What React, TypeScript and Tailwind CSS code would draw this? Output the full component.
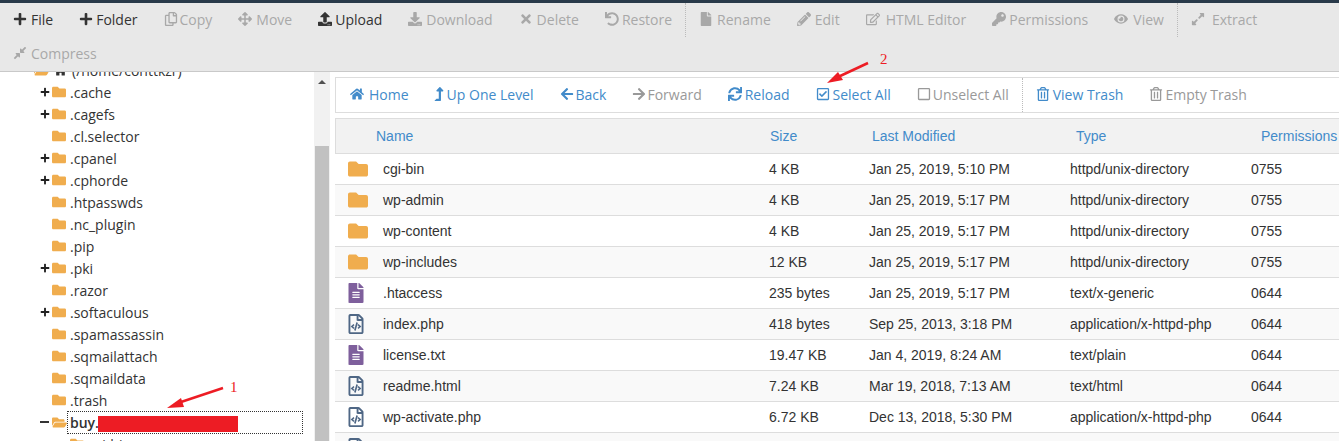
import type { ComponentType } from 'react'
import {
  FaPlus, FaRegCopy, FaArrowsAlt, FaUpload, FaDownload, FaTimes, FaUndo, FaFile, FaPencilAlt, FaRegEdit,
  FaKey, FaEye, FaExpandAlt, FaCompressAlt, FaHome, FaLevelUpAlt, FaArrowLeft, FaArrowRight, FaSync,
  FaRegCheckSquare, FaRegSquare, FaRegTrashAlt, FaFolder, FaFolderOpen, FaFileAlt, FaRegFileCode,
} from 'react-icons/fa'

type Icon = ComponentType<{ size?: number; className?: string }>
type Item = { label: string; icon: Icon; slot: string; on?: boolean; sep?: boolean; nudge?: string }

const TOOLS: Item[] = [
  { label: 'File', icon: FaPlus, slot: 'w-[18px]', on: true },
  { label: 'Folder', icon: FaPlus, slot: 'w-[17px]', on: true },
  { label: 'Copy', icon: FaRegCopy, slot: 'w-[16px]' },
  { label: 'Move', icon: FaArrowsAlt, slot: 'w-[18px]' },
  { label: 'Upload', icon: FaUpload, slot: 'w-[17px]', on: true },
  { label: 'Download', icon: FaDownload, slot: 'w-[18px]' },
  { label: 'Delete', icon: FaTimes, slot: 'w-[18px]' },
  { label: 'Restore', icon: FaUndo, slot: 'w-[17px]', sep: true },
  { label: 'Rename', icon: FaFile, slot: 'w-[18px]' },
  { label: 'Edit', icon: FaPencilAlt, slot: 'w-[18px]' },
  { label: 'HTML Editor', icon: FaRegEdit, slot: 'w-[20px]' },
  { label: 'Permissions', icon: FaKey, slot: 'w-[17px]' },
  { label: 'View', icon: FaEye, slot: 'w-[19px]', sep: true },
  { label: 'Extract', icon: FaExpandAlt, slot: 'w-[21px]' },
  { label: 'Compress', icon: FaCompressAlt, slot: 'w-[18px]' },
]

const TREE = [
  { name: '.cache', plus: true },
  { name: '.cagefs', plus: true },
  { name: '.cl.selector' },
  { name: '.cpanel', plus: true },
  { name: '.cphorde', plus: true },
  { name: '.htpasswds' },
  { name: '.nc_plugin' },
  { name: '.pip' },
  { name: '.pki', plus: true },
  { name: '.razor' },
  { name: '.softaculous', plus: true },
  { name: '.spamassassin' },
  { name: '.sqmailattach' },
  { name: '.sqmaildata' },
  { name: '.trash' },
]

const NAV: Item[] = [
  { label: 'Home', icon: FaHome, slot: 'w-[19px]', on: true },
  { label: 'Up One Level', icon: FaLevelUpAlt, slot: 'w-[12px]', on: true, nudge: '-ml-[3px]' },
  { label: 'Back', icon: FaArrowLeft, slot: 'w-[16px]', on: true },
  { label: 'Forward', icon: FaArrowRight, slot: 'w-[15px]' },
  { label: 'Reload', icon: FaSync, slot: 'w-[17px]', on: true },
  { label: 'Select All', icon: FaRegCheckSquare, slot: 'w-[17px]', on: true },
  { label: 'Unselect All', icon: FaRegSquare, slot: 'w-[16px]', sep: true },
  { label: 'View Trash', icon: FaRegTrashAlt, slot: 'w-[17px]', on: true },
  { label: 'Empty Trash', icon: FaRegTrashAlt, slot: 'w-[16px]' },
]

const FILES = [
  { name: 'cgi-bin', size: '4 KB', date: 'Jan 25, 2019, 5:10 PM', type: 'httpd/unix-directory', perm: '0755', kind: 'dir' },
  { name: 'wp-admin', size: '4 KB', date: 'Jan 25, 2019, 5:17 PM', type: 'httpd/unix-directory', perm: '0755', kind: 'dir' },
  { name: 'wp-content', size: '4 KB', date: 'Jan 25, 2019, 5:17 PM', type: 'httpd/unix-directory', perm: '0755', kind: 'dir' },
  { name: 'wp-includes', size: '12 KB', date: 'Jan 25, 2019, 5:17 PM', type: 'httpd/unix-directory', perm: '0755', kind: 'dir' },
  { name: '.htaccess', size: '235 bytes', date: 'Jan 25, 2019, 5:17 PM', type: 'text/x-generic', perm: '0644', kind: 'text' },
  { name: 'index.php', size: '418 bytes', date: 'Sep 25, 2013, 3:18 PM', type: 'application/x-httpd-php', perm: '0644', kind: 'code' },
  { name: 'license.txt', size: '19.47 KB', date: 'Jan 4, 2019, 8:24 AM', type: 'text/plain', perm: '0644', kind: 'text' },
  { name: 'readme.html', size: '7.24 KB', date: 'Mar 19, 2018, 7:13 AM', type: 'text/html', perm: '0644', kind: 'code' },
  { name: 'wp-activate.php', size: '6.72 KB', date: 'Dec 13, 2018, 5:30 PM', type: 'application/x-httpd-php', perm: '0644', kind: 'code' },
  { name: 'wp-blog-header.php', size: '369 bytes', date: 'Dec 13, 2018, 5:30 PM', type: 'application/x-httpd-php', perm: '0644', kind: 'code' },
]

function FileIcon({ kind }: { kind: string }) {
  if (kind === 'dir') return <FaFolder size={20} className="text-[#f0ad4e]" />
  if (kind === 'text') return <FaFileAlt size={20} className="-ml-[2px] text-[#7e5f9c]" />
  return <FaRegFileCode size={20} className="-ml-[2px] text-[#4f6785]" />
}

export default function App() {
  return (
    <div className="relative flex h-[441px] flex-col overflow-hidden bg-white font-['Open_Sans',sans-serif] text-[14px] text-[#333]">
      <div className="h-[3px] shrink-0 bg-[#293a4a]" />

      {/* Toolbar */}
      <div className="flex h-[69px] shrink-0 flex-wrap content-start border-b border-[#c9c9c9] bg-[#e8e8e8]">
        {TOOLS.map(t => (
          <div
            key={t.label}
            className={`flex h-[34px] items-center px-[13px] pb-[2px] ${t.on ? 'text-[#333]' : 'text-[#a8a8a8]'} ${t.sep ? 'border-r border-dotted border-[#bbb]' : ''}`}
          >
            <span className={`flex shrink-0 ${t.slot}`}><t.icon size={14} className="shrink-0" /></span>
            <span>{t.label}</span>
          </div>
        ))}
      </div>

      <div className="flex min-h-0 flex-1">
        {/* Folder tree */}
        <div className="w-[314px] shrink-0 overflow-hidden">
          <div className="-mt-[13px] pl-[22px]">
            <div className="flex h-[22px] items-center">
              <span className="h-[2px] w-[9px] bg-[#bbb]" />
              <FaFolderOpen size={15} className="ml-[3px] text-[#f0ad4e]" />
              <FaHome size={13} className="ml-[5px] text-[#333]" />
              <span className="ml-[5px]">(/home/conttkzr)</span>
            </div>
            {TREE.map(f => (
              <div key={f.name} className="flex h-[22px] items-center pl-[18px]">
                <span className="flex w-[12px] shrink-0">{f.plus && <FaPlus size={10} className="text-[#222]" />}</span>
                <FaFolder size={14} className="text-[#f0ad4e]" />
                <span className="ml-[4px]">{f.name}</span>
              </div>
            ))}
            <div className="flex h-[22px] items-center pl-[18px]">
              <span className="h-[2px] w-[9px] shrink-0 bg-[#333]" />
              <FaFolderOpen size={15} className="ml-[3px] text-[#f0ad4e]" />
              <span className="flex h-[23px] w-[236px] shrink-0 items-center border border-dotted border-[#333] pl-[2px] font-semibold">buy.</span>
            </div>
            <div className="flex h-[22px] items-center pl-[48px]">
              <FaFolder size={14} className="text-[#f0ad4e]" />
              <span className="ml-[4px]">cgi-bin</span>
            </div>
          </div>
        </div>

        {/* Scrollbar */}
        <div className="relative w-[16px] shrink-0 bg-[#f1f1f1]">
          <div className="mx-auto mt-[8px] h-0 w-0 border-x-[4px] border-b-[4px] border-x-transparent border-b-[#505050]" />
          <div className="mx-[1px] mt-[62px] h-[300px] bg-[#c1c1c1]" />
        </div>

        {/* File list */}
        <div className="min-w-0 flex-1 overflow-hidden pl-[5px] pt-[5px]">
          <div className="flex h-[36px] items-center border border-r-0 border-[#ddd] pl-[1px]">
            {NAV.map(n => (
              <div
                key={n.label}
                className={`flex h-full items-center px-[13px] pb-[2px] ${n.on ? 'text-[#428bca]' : 'text-[#999]'} ${n.sep ? 'border-r border-dotted border-[#bbb]' : ''}`}
              >
                <span className={`flex shrink-0 ${n.slot}`}><n.icon size={14} className={`shrink-0 ${n.nudge ?? ''}`} /></span>
                <span>{n.label}</span>
              </div>
            ))}
          </div>

          <div className="mt-[5px] flex h-[36px] items-center border border-r-0 border-[#ddd] bg-[#f2f2f2] font-['Liberation_Sans',sans-serif] text-[#428bca]">
            <span className="ml-[40px] w-[394px]">Name</span>
            <span className="w-[102px]">Size</span>
            <span className="w-[204px]">Last Modified</span>
            <span className="w-[185px]">Type</span>
            <span>Permissions</span>
          </div>

          {FILES.map((f, i) => (
            <div key={f.name} className={`flex h-[31px] shrink-0 items-center border-b border-[#ddd] pl-[13px] font-['Liberation_Sans',sans-serif] ${i % 2 ? 'bg-[#f9f9f9]' : 'bg-white'}`}>
              <span className="flex w-[35px] shrink-0"><FileIcon kind={f.kind} /></span>
              <span className="w-[386px] shrink-0">{f.name}</span>
              <span className="w-[100px] shrink-0">{f.size}</span>
              <span className="w-[201px] shrink-0">{f.date}</span>
              <span className="w-[181px] shrink-0">{f.type}</span>
              <span>{f.perm}</span>
            </div>
          ))}
        </div>
      </div>

      {/* Annotations drawn over the screenshot */}
      <div className="absolute left-[98px] top-[416px] h-[16px] w-[140px] bg-[#ed1c24]" />
      <svg className="pointer-events-none absolute inset-0" width="1339" height="441">
        <path d="M223 388 L178 403" stroke="#ed1c24" strokeWidth="2.5" />
        <path d="M167 408 L181 398 L184 407 Z" fill="#ed1c24" />
        <path d="M868 63 L838 77" stroke="#ed1c24" strokeWidth="2.5" />
        <path d="M827 83 L838 72 L843 80 Z" fill="#ed1c24" />
      </svg>
      <span className="absolute left-[230px] top-[376px] font-['Liberation_Serif',serif] text-[15px] text-[#ed1c24]">1</span>
      <span className="absolute left-[880px] top-[48px] font-['Liberation_Serif',serif] text-[15px] text-[#ed1c24]">2</span>
    </div>
  )
}
